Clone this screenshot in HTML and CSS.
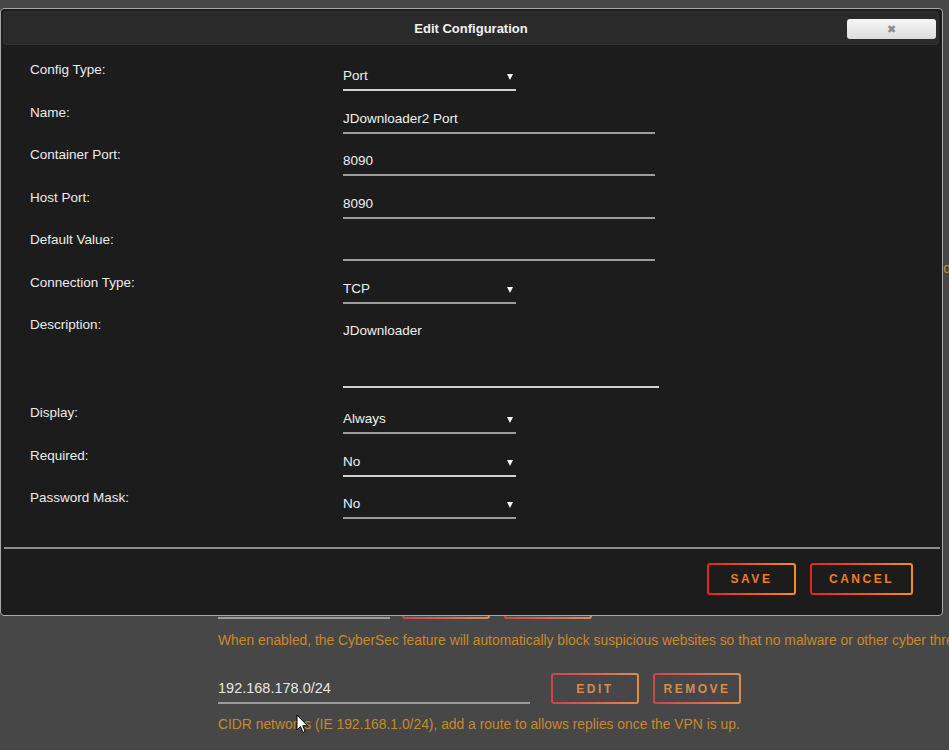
FILE: index.html
```html
<!DOCTYPE html>
<html lang="en">
<head>
    <meta charset="UTF-8">
    <meta name="viewport" content="width=device-width, initial-scale=1.0">
    <title>Edit Configuration</title>
    <link rel="stylesheet" href="styles.css">
</head>
<body>
    <!-- page behind the modal -->
    <div class="page">
        <p class="hint hint-top">Traffic to and from the listed networks will bypass the tunnel and is never routed or filtered</p>

        <div class="field-row first-row">
            <div class="page-input short"></div>
            <button class="page-btn">EDIT</button>
            <button class="page-btn">REMOVE</button>
        </div>
        <p class="hint hint-mid">When enabled, the CyberSec feature will automatically block suspicious websites so that no malware or other cyber threats can reach your devices.</p>

        <div class="field-row second-row">
            <div class="page-input">192.168.178.0/24</div>
            <button class="page-btn">EDIT</button>
            <button class="page-btn">REMOVE</button>
        </div>
        <p class="hint hint-low">CIDR networks (IE 192.168.1.0/24), add a route to allows replies once the VPN is up.</p>
    </div>

    <div class="modal">
        <div class="modal-header">
            <span class="modal-title">Edit Configuration</span>
            <button class="close-btn">&#x2716;</button>
        </div>

        <form class="config-form">
            <div class="row">
                <label>Config Type:</label>
                <div class="field select light">Port</div>
            </div>
            <div class="row">
                <label>Name:</label>
                <div class="field text">JDownloader2 Port</div>
            </div>
            <div class="row">
                <label>Container Port:</label>
                <div class="field text">8090</div>
            </div>
            <div class="row">
                <label>Host Port:</label>
                <div class="field text">8090</div>
            </div>
            <div class="row">
                <label>Default Value:</label>
                <div class="field text"></div>
            </div>
            <div class="row">
                <label>Connection Type:</label>
                <div class="field select">TCP</div>
            </div>
            <div class="row desc-row">
                <label>Description:</label>
                <div class="field textarea light">JDownloader</div>
            </div>
            <div class="row">
                <label>Display:</label>
                <div class="field select">Always</div>
            </div>
            <div class="row">
                <label>Required:</label>
                <div class="field select light">No</div>
            </div>
            <div class="row">
                <label>Password Mask:</label>
                <div class="field select">No</div>
            </div>
        </form>

        <div class="divider"></div>

        <div class="modal-footer">
            <button class="action-btn save">SAVE</button>
            <button class="action-btn cancel">CANCEL</button>
        </div>
    </div>

    <svg class="cursor" width="13" height="20" viewBox="0 0 13 20">
        <path d="M1 1 L1 16 L4.5 12.5 L7 18.5 L9.2 17.6 L6.8 11.8 L11.5 11.8 Z" fill="#fff" stroke="#000" stroke-width="1"/>
    </svg>
</body>
</html>
```

FILE: styles.css
```css
body {
    margin: 0;
    background-color: #474747;
    font-family: "Liberation Sans", Arial, sans-serif;
    font-size: 13px;
    overflow: hidden;
    height: 750px;
    position: relative;
}
.page {
    padding-left: 218px;
    padding-top: 258px;
}
.hint {
    margin: 0;
    color: #c8892d;
    font-size: 13.85px;
    line-height: 20px;
    white-space: nowrap;
}
.hint-top {
    text-align: right;
    margin-right: -2px;
}
.hint-mid {
    margin-top: 11px;
}
.hint-low {
    margin-top: 10px;
}
.field-row {
    display: flex;
    align-items: flex-end;
}
.first-row {
    margin-top: 310px;
}
.second-row {
    margin-top: 23px;
}
.page-input {
    width: 312px;
    color: #e6e6e6;
    font-size: 14.5px;
    line-height: 20px;
    padding-bottom: 4px;
    border-bottom: 2px solid #9a9a9a;
    margin-right: 21px;
}
.page-input.short {
    width: 172px;
    height: 20px;
    margin-right: 12px;
}
.page-btn {
    width: 88px;
    height: 31px;
    margin-right: 14px;
    border: 2px solid transparent;
    border-radius: 3px;
    background: linear-gradient(#474747, #474747) padding-box,
                linear-gradient(to right, #c9474a, #dd8d4c) border-box;
    color: #d88b4c;
    font-family: "Liberation Sans", Arial, sans-serif;
    font-weight: bold;
    font-size: 12px;
    letter-spacing: 2.5px;
    padding: 0;
}

/* modal */
.modal {
    position: absolute;
    left: 0;
    top: 8px;
    width: 941px;
    height: 606px;
    background-color: #1c1c1c;
    border: 1px solid #a8a8a8;
    border-radius: 4px;
}
.modal-header {
    margin: 2px 3px 0 2px;
    height: 34px;
    background-color: #2a2a2a;
    border-radius: 4px;
    box-shadow: inset 0 0 0 1px #303030;
    display: flex;
    align-items: center;
    justify-content: center;
    position: relative;
}
.modal-title {
    color: #f2f2f2;
    font-weight: bold;
    font-size: 13px;
}
.close-btn {
    position: absolute;
    right: 3px;
    top: 8px;
    width: 89px;
    height: 20px;
    border: none;
    border-radius: 3px;
    background: linear-gradient(#f6f6f6, #dcdcdc);
    color: #8a8a8a;
    font-size: 11px;
    line-height: 20px;
    padding: 0;
}
.config-form {
    padding: 8px 0 0 29px;
    height: 494px;
}
.row {
    display: flex;
    height: 38px;
    margin-bottom: 4.5px;
}
.row label {
    width: 313px;
    margin-top: 8px;
    line-height: 18px;
    color: #ececec;
    font-size: 13.5px;
}
.field {
    margin-top: 12px;
    line-height: 21px;
    height: 21px;
    padding-bottom: 3px;
    border-bottom: 2px solid #9c9c9c;
    color: #f0f0f0;
    font-size: 13.5px;
    position: relative;
}
.field.light {
    border-bottom-color: #d0d0d0;
}
.field.select {
    width: 173px;
}
.field.select::after {
    content: "";
    position: absolute;
    right: 3px;
    top: 9px;
    border-left: 3px solid transparent;
    border-right: 3px solid transparent;
    border-top: 6px solid #f4f4f4;
}
.field.text {
    width: 312px;
}
.desc-row {
    height: 82px;
    margin-bottom: 6px;
}
.field.textarea {
    width: 316px;
    height: 21px;
    padding-bottom: 45px;
}
.divider {
    margin: 0 2px 0 3px;
    height: 2px;
    background-color: #8c8c8c;
}
.modal-footer {
    display: flex;
    justify-content: flex-end;
    padding: 14px 29px 0 0;
}
.action-btn {
    height: 32px;
    margin-left: 14px;
    border: 2px solid transparent;
    border-radius: 3px;
    background: linear-gradient(#1c1c1c, #1c1c1c) padding-box,
                linear-gradient(to right, #e0261d, #f78d1e) border-box;
    color: #f27c23;
    font-family: "Liberation Sans", Arial, sans-serif;
    font-weight: bold;
    font-size: 12px;
    letter-spacing: 2.5px;
    padding: 0;
}
.action-btn.save {
    width: 89px;
}
.action-btn.cancel {
    width: 103px;
}
.cursor {
    position: absolute;
    left: 296px;
    top: 714px;
}
```
